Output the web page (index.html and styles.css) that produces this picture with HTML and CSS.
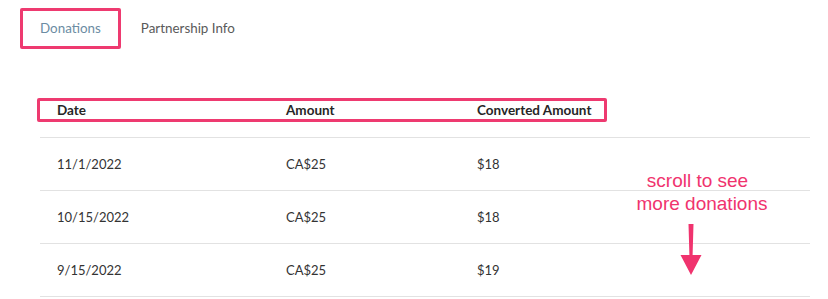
FILE: index.html
```html
<!DOCTYPE html>
<html>
<head>
<meta charset="utf-8">
<link rel="stylesheet" href="styles.css">
</head>
<body>
<div class="page">
  <nav class="tabs">
    <div class="tab tab-active">Donations</div>
    <div class="tab">Partnership Info</div>
  </nav>
  <div class="table">
    <div class="row head">
      <div class="cell">Date</div>
      <div class="cell">Amount</div>
      <div class="cell">Converted Amount</div>
      <div class="head-mark"></div>
    </div>
    <div class="row">
      <div class="cell">11/1/2022</div>
      <div class="cell">CA$25</div>
      <div class="cell">$18</div>
    </div>
    <div class="row">
      <div class="cell">10/15/2022</div>
      <div class="cell">CA$25</div>
      <div class="cell">$18</div>
    </div>
    <div class="row">
      <div class="cell">9/15/2022</div>
      <div class="cell">CA$25</div>
      <div class="cell">$19</div>
    </div>
    <div class="note">
      <div class="note-line note-line-first">scroll to see</div>
      <div class="note-line">more donations</div>
      <svg class="note-arrow" width="24" height="54" viewBox="0 0 24 54">
        <path d="M9.5 0 L14.5 0 L13.6 31 L22.5 31 L12 51 L1.5 31 L10.4 31 Z" fill="#f0336e"/>
      </svg>
    </div>
  </div>
</div>
</body>
</html>
```
FILE: styles.css
```css
html, body {
  margin: 0;
  padding: 0;
  background: #ffffff;
}
body {
  font-family: "Lato", "Noto Sans", sans-serif;
  color: #333333;
}
.page {
  width: 828px;
  height: 299px;
  overflow: hidden;
}
.tabs {
  display: flex;
  align-items: center;
  padding: 8px 0 0 20px;
}
.tab {
  height: 35px;
  line-height: 35px;
  padding: 0 17px;
  border: 3px solid transparent;
  font-size: 13.4px;
  color: #5a5a5a;
}
.tab-active {
  color: #6c8ca3;
  border-color: #ee3a70;
  border-radius: 2px;
}
.table {
  position: relative;
  margin: 34px 0 0 40px;
  width: 770px;
}
.row {
  position: relative;
  display: grid;
  grid-template-columns: 229px 191px 1fr;
  align-items: center;
  height: 52px;
  border-bottom: 1px solid #e2e2e2;
  font-size: 13px;
}
.row.head {
  height: 54px;
  font-weight: 700;
  font-size: 13.5px;
  color: #262626;
}
.cell {
  padding-left: 17px;
}
.head-mark {
  position: absolute;
  left: -3px;
  top: 15px;
  width: 564px;
  height: 18px;
  border: 3px solid #ee3a70;
  border-radius: 2px;
}
.note {
  position: absolute;
  left: 587px;
  top: 86px;
  width: 150px;
  display: flex;
  flex-direction: column;
  align-items: center;
}
.note-line {
  font-family: "Liberation Sans", Arial, sans-serif;
  font-size: 19px;
  line-height: 23px;
  color: #f0336e;
  white-space: nowrap;
}
.note-line-first {
  margin-right: 9px;
}
.note-arrow {
  margin-top: 9px;
  margin-left: -22px;
}
```
